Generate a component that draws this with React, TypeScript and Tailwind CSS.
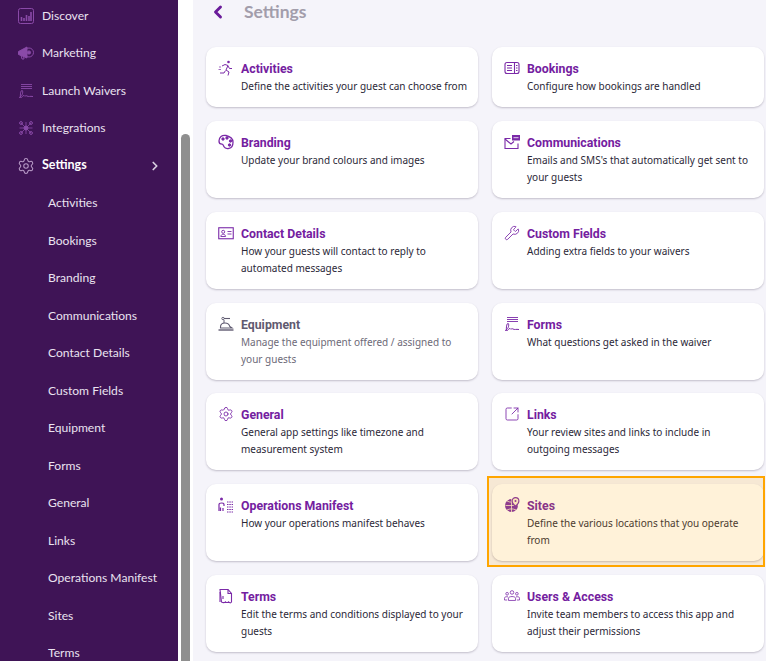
import React from 'react';
import { ChevronLeft, ChevronRight, Settings, SquareArrowOutUpRight, Wrench } from 'lucide-react';

type IconProps = { className?: string };

const Svg = ({ className, children }: IconProps & { children: React.ReactNode }) => (
  <svg viewBox="0 0 16 16" fill="none" stroke="currentColor" strokeWidth={1} className={className}>
    {children}
  </svg>
);

const Chart = ({ className }: IconProps) => (
  <Svg className={className}>
    <rect x="0.5" y="0.5" width="15" height="15" rx="2" />
    <path d="M3.5 13V9M6 13V10M8.5 13V7M11 13V8M13 13V4" strokeWidth={1.6} />
  </Svg>
);

const Megaphone = ({ className }: IconProps) => (
  <Svg className={className}>
    <path d="M0.5 6.5 L9 2 V13 L0.5 9.5Z" fill="currentColor" />
    <path d="M3 10 L4 14 H6 L5.5 11" />
    <circle cx="11" cy="7.5" r="4.5" />
    <circle cx="11" cy="7.5" r="1.6" fill="currentColor" />
  </Svg>
);

const Signature = ({ className }: IconProps) => (
  <Svg className={className}>
    <path d="M3 1.5H14M3 3.5H14M3 5.5H14" strokeWidth={0.9} />
    <path d="M1 14.5C4 14 5.5 9 4.3 7.5 3 6.5 2 11 2.5 14.5 3.5 15.5 5 12 6 12.5 6.5 14 8 12 9 13 10.500 14 12 13 15 13.500" />
  </Svg>
);

const Nodes = ({ className }: IconProps) => (
  <Svg className={className}>
    <path d="M8 8 3 3M8 8l5-5M8 8l-5 5M8 8l5 5M8 8H1.500M8 8h6.500M8 8V2M8 8v6" strokeWidth={0.8} />
    <circle cx="8" cy="8" r="2" fill="currentColor" />
    <circle cx="3" cy="3" r="1.400" />
    <circle cx="13" cy="3" r="1.400" />
    <circle cx="3" cy="13" r="1.400" />
    <circle cx="13" cy="13" r="1.400" />
  </Svg>
);

const Runner = ({ className }: IconProps) => (
  <Svg className={className}>
    <circle cx="10.500" cy="2" r="1.300" fill="currentColor" stroke="none" />
    <path d="M4 6 7 4.500 10 5.500 8 10 11 12 10 15.500M7.500 10.500 6 13H2M10 6l1.500 2.500H14" strokeWidth={1} />
    <path d="M1 7h2M0.500 9.500h2.500" strokeWidth={0.7} />
  </Svg>
);

const Palette = ({ className }: IconProps) => (
  <Svg className={className}>
    <path d="M8 1.500C4 .5 1 3.500 1 7c0 2 1.500 3.200 3 3.200 1.200 0 1.300 1.300 2 2.600.8 1.500 3 2 5 1.600 3-.6 4-3 4-6.200 0-3.600-3-5.700-7-6.700Z" strokeWidth={1.3} />
    <circle cx="5" cy="5" r="1.200" fill="currentColor" />
    <circle cx="9" cy="4" r="1.200" fill="currentColor" />
    <circle cx="12.500" cy="7" r="1.200" fill="currentColor" />
    <circle cx="11.500" cy="11" r="1.200" fill="currentColor" />
  </Svg>
);

const Booking = ({ className }: IconProps) => (
  <Svg className={className}>
    <rect x="1" y="2.500" width="14" height="11" rx="2" strokeWidth={1.1} />
    <path d="M10.500 2.500v11" strokeWidth={1.1} />
    <path d="M3 5.500h5M3 8h5M3 10.500h5M12 5.500h1.500M12 8h1.500M12 10.500h1.500" strokeWidth={1.1} />
  </Svg>
);

const Mail = ({ className }: IconProps) => (
  <Svg className={className}>
    <path d="M6.500 4.500H1v10h13V9.500" strokeWidth={1.1} />
    <path d="M1 5l6 5 3-2.500" strokeWidth={1.1} />
    <rect x="8" y="1" width="8" height="5.500" fill="currentColor" stroke="none" />
    <path d="M9.500 3.700h5" stroke="white" strokeWidth={0.8} />
  </Svg>
);

const IdCard = ({ className }: IconProps) => (
  <Svg className={className}>
    <rect x="0.750" y="2.750" width="14.500" height="11" strokeWidth={1.1} />
    <circle cx="5.200" cy="6.800" r="1.500" strokeWidth={0.9} />
    <path d="M2.800 11.500c.3-3 4.500-3 4.800 0ZM9.500 6.500h4M9.500 9h4" strokeWidth={0.9} />
  </Svg>
);

const Bell = ({ className }: IconProps) => (
  <Svg className={className}>
    <path d="M6 2.500h6" strokeWidth={1.1} />
    <circle cx="5" cy="2.500" r="1.200" strokeWidth={0.9} />
    <path d="M6 4v3" strokeWidth={1} />
    <path d="M2.500 11c0-3 2-4 4.500-4s4.200 1.200 4.800 3.500L14 12H2.500Z" strokeWidth={1.1} />
    <path d="M.5 14h15" strokeWidth={1.4} />
  </Svg>
);

const Manifest = ({ className }: IconProps) => (
  <Svg className={className}>
    <circle cx="3.500" cy="2" r="1.500" fill="currentColor" stroke="none" />
    <path d="M1 14V7.500C1 5.500 6 5.500 6 7.500V9M2.500 14v-3.500M5 14v-3" strokeWidth={1.2} />
    <path d="M9 5h6M9 7.500h6M9 10h6M9 12.500h6M9 15h6" strokeWidth={1.1} strokeDasharray="1.500 .8" />
  </Svg>
);

const Doc = ({ className }: IconProps) => (
  <Svg className={className}>
    <path d="M2 1.500h8l3.500 4V14c-1 1.500-2 .8-3-.2-1 1-2 1-3 0-1 1-2.500 1-4 .2Z" strokeWidth={1.1} />
    <path d="M10 1.500V5.500h3.500M2 4v10M5 8v3" strokeWidth={1.1} />
  </Svg>
);

const Globe = ({ className }: IconProps) => (
  <Svg className={className}>
    <circle cx="7.500" cy="8.500" r="6.500" fill="currentColor" stroke="none" />
    <path d="M1.500 8.500h12M7.500 2v13M3 4c3 1.500 6 1.500 9 0M3 13c3-1.500 6-1.500 9 0" stroke="#fdf0d8" strokeWidth={0.8} />
    <path d="M11.500 .6a3.400 3.400 0 0 1 3.400 3.400c0 2.500-3.400 5.500-3.400 5.500S8.100 6.500 8.100 4A3.400 3.400 0 0 1 11.500 .6Z" fill="#fdf0d8" strokeWidth={1.1} />
    <circle cx="11.500" cy="3.900" r="1" fill="currentColor" stroke="none" />
  </Svg>
);

const Team = ({ className }: IconProps) => (
  <svg viewBox="0 0 18 14" fill="none" stroke="currentColor" strokeWidth={0.9} className={className}>
    <circle cx="9" cy="3" r="2" />
    <circle cx="3.500" cy="4.500" r="1.500" />
    <circle cx="14.500" cy="4.500" r="1.500" />
    <path d="M5 12V9.500C5 7 13 7 13 9.500V12ZM3.500 11.500H.5V9.500C.5 8 2.500 7.500 4.500 8M14.500 11.500h3V9.500C17.500 8 15.500 7.500 13.500 8" />
  </svg>
);

const topNav = [
  { name: 'Discover', Icon: Chart },
  { name: 'Marketing', Icon: Megaphone },
  { name: 'Launch Waivers', Icon: Signature },
  { name: 'Integrations', Icon: Nodes },
];

const subNav = [
  'Activities',
  'Bookings',
  'Branding',
  'Communications',
  'Contact Details',
  'Custom Fields',
  'Equipment',
  'Forms',
  'General',
  'Links',
  'Operations Manifest',
  'Sites',
  'Terms',
];

const cards = [
  { title: 'Activities', text: 'Define the activities your guest can choose from', Icon: Runner },
  { title: 'Bookings', text: 'Configure how bookings are handled', Icon: Booking },
  { title: 'Branding', text: 'Update your brand colours and images', Icon: Palette },
  { title: 'Communications', text: "Emails and SMS's that automatically get sent to your guests", Icon: Mail },
  { title: 'Contact Details', text: 'How your guests will contact to reply to automated messages', Icon: IdCard },
  { title: 'Custom Fields', text: 'Adding extra fields to your waivers', Icon: Wrench },
  { title: 'Equipment', text: 'Manage the equipment offered / assigned to your guests', Icon: Bell, muted: true },
  { title: 'Forms', text: 'What questions get asked in the waiver', Icon: Signature },
  { title: 'General', text: 'General app settings like timezone and measurement system', Icon: Settings },
  { title: 'Links', text: 'Your review sites and links to include in outgoing messages', Icon: SquareArrowOutUpRight },
  { title: 'Operations Manifest', text: 'How your operations manifest behaves', Icon: Manifest },
  { title: 'Sites', text: 'Define the various locations that you operate from', Icon: Globe, active: true },
  { title: 'Terms', text: 'Edit the terms and conditions displayed to your guests', Icon: Doc },
  { title: 'Users & Access', text: 'Invite team members to access this app and adjust their permissions', Icon: Team },
];

const Sidebar = () => (
  <aside className="w-[178px] shrink-0 bg-[#3f1456] text-[12.1px] text-[#eae3f0] -mt-[3px] font-['Lato',sans-serif]">
    {topNav.map(({ name, Icon }) => (
      <div key={name} className="flex h-[37.5px] items-center pl-[18px]">
        <Icon className="h-4 w-4 text-[#8a4aa8]" />
        <span className="ml-[8px]">{name}</span>
      </div>
    ))}
    <div className="flex h-[37.5px] items-center pl-[17px] pr-[16px] text-[12.5px] font-bold text-white">
      <Settings className="h-[18px] w-[18px] text-[#b79ac6]" strokeWidth={1.4} />
      <span className="ml-[7px] flex-1">Settings</span>
      <ChevronRight className="h-3.5 w-3.5 text-[#d8cfe0]" strokeWidth={3} />
    </div>
    {subNav.map((name) => (
      <div key={name} className="flex h-[37.5px] items-center pl-[48px]">
        {name}
      </div>
    ))}
  </aside>
);

const Card = ({ title, text, Icon, muted, active }: (typeof cards)[number] & { muted?: boolean; active?: boolean }) => (
  <div className="relative flex items-start rounded-[10px] bg-white pl-[12px] pr-[10px] pt-[13px] shadow-[0_1px_2px_rgba(60,50,80,0.28)]">
    <Icon
      className={`h-4 w-4 shrink-0 ${muted ? 'text-[#5f5a70]' : 'text-[#7b2aa8]'}`}
      strokeWidth={1.3}
    />
    <div className="ml-[7px] min-w-0">
      <div className={`text-[12.3px] font-bold leading-[18px] font-['Roboto',sans-serif] ${muted ? 'text-[#5f5a70]' : 'text-[#7420a0]'}`}>
        {title}
      </div>
      <p className={`text-[10px] leading-[17px] ${muted ? 'text-[#6d6a78]' : 'text-[#2b2838]'}`}>{text}</p>
    </div>
    {active && (
      <div className="pointer-events-none absolute -bottom-[6px] -left-[5px] -right-px -top-[8px] border-2 border-[#ffa500] bg-[#ffa500]/15" />
    )}
  </div>
);

export default function App() {
  return (
    <div className="flex h-[661px] overflow-hidden bg-white font-['Noto_Sans',sans-serif]">
      <Sidebar />
      <div className="flex w-[15px] shrink-0 justify-center pt-[134px]">
        <div className="h-full w-[9px] rounded-t-[5px] bg-[#8f8f8f]" />
      </div>
      <main className="min-w-0 flex-1 bg-[#f5f4fa] pl-[13px] pr-[2px]">
        <div className="flex h-[47px] items-start pt-[2px]">
          <ChevronLeft className="ml-[2px] h-5 w-5 text-[#6a1b9a]" strokeWidth={3.5} />
          <h1 className="ml-4 text-[17.5px] font-bold leading-5 text-[#a29dab] font-['Lato',sans-serif]">Settings</h1>
        </div>
        <div className="grid grid-cols-[272px_272px] gap-x-[14px] gap-y-[13.85px] [grid-auto-rows:77px] [grid-template-rows:60px]">
          {cards.map((card) => (
            <Card key={card.title} {...card} />
          ))}
        </div>
      </main>
    </div>
  );
}
